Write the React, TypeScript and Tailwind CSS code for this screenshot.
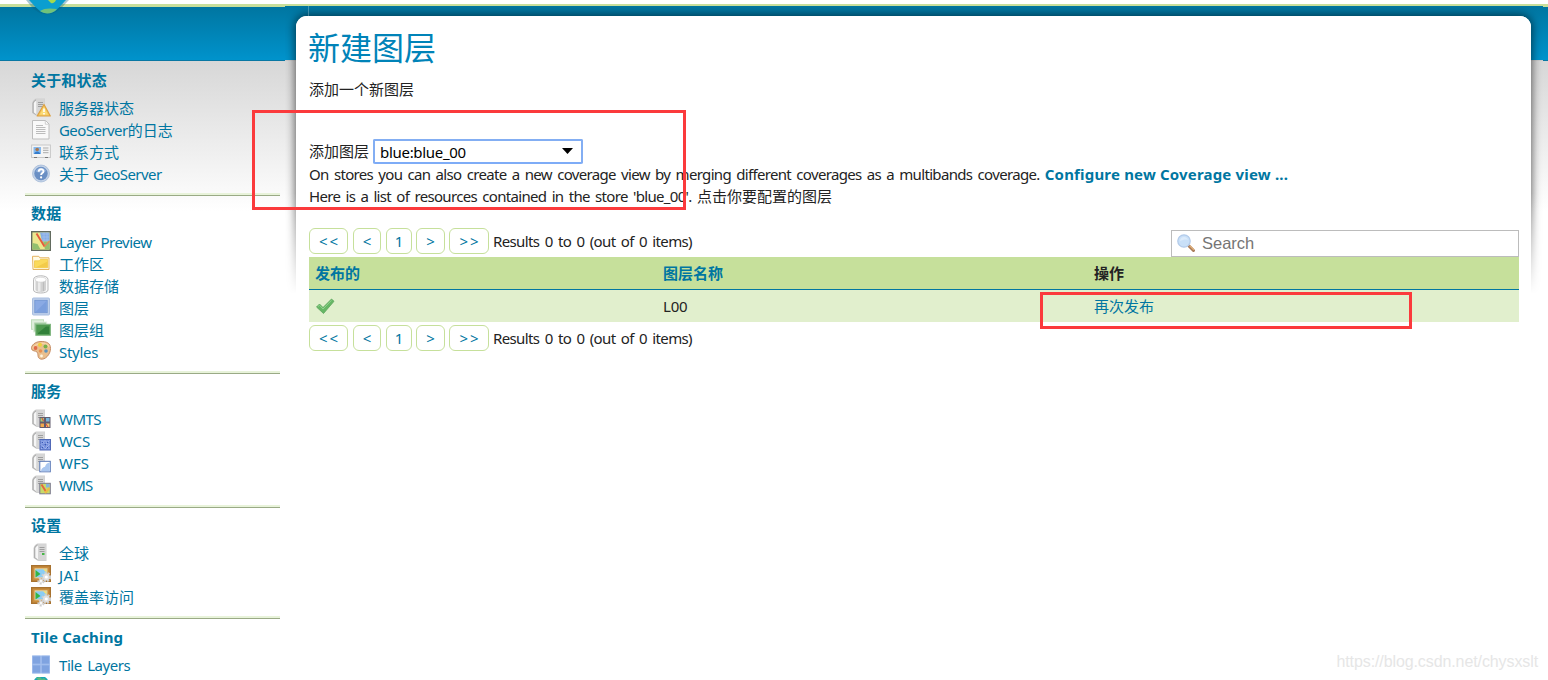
import React from "react";

type IconName =
  | "status" | "page" | "contact" | "help" | "preview" | "folder" | "store" | "layer" | "group" | "styles"
  | "wmts" | "wcs" | "wfs" | "wms" | "server" | "jai" | "tiles" | "globe";

function Tower() {
  return (
    <g>
      <path d="M1 5.500C1 3.500 3 1.500 5 .6h9V18H5.500L1 15z" fill="#d0d0d0" />
      <path d="M1.500 5.500C1.500 4 3 2.200 5 1.200V17L1.500 14.700z" fill="#b0b0b0" />
      <path d="M2.800 5.500c.2-1.300 1.200-2.500 2.700-3v14l-2.700-2z" fill="#f6f6f6" />
      <path d="M5.500 1.200h8V17h-8z" fill="#d6d6d6" />
      <path d="M7 4.500h5M7 6.500h5M7 8.500h5" stroke="#989898" strokeWidth=".9" />
    </g>
  );
}

function Gear({ cx, cy, r }: { cx: number; cy: number; r: number }) {
  return (
    <g>
      <circle cx={cx} cy={cy} r={r} fill="none" stroke="#cfcfcf" strokeWidth="2" strokeDasharray="2 1.300" />
      <circle cx={cx} cy={cy} r={r - 0.6} fill="#dfdfdf" />
      <circle cx={cx} cy={cy} r={r * 0.4} fill="#fff" />
    </g>
  );
}

function Icon({ name }: { name: IconName }) {
  const body = () => {
    switch (name) {
      case "status":
        return (<><Tower /><path d="M13 6.500 19.300 18H6.200z" fill="#f7cb5c" stroke="#dca044" strokeWidth="1.200" strokeLinejoin="round" /><path d="M13 9.300 16.800 16.500H9z" fill="#fbdc78" /><path d="M13 10.500v3.500M13 15v1.400" stroke="#fff" strokeWidth="1.600" /></>);
      case "page":
        return (<><path d="M1.500 .5h13l3.500 3.500v15H1.500z" fill="#f9f9f9" stroke="#bdbdbd" /><path d="M14.300 1v3.200h3.200" fill="#fff" stroke="#c5c5c5" strokeWidth=".8" /><path d="M5 5.500h7M5 7.500h9.500M5 9.500h9.500M5 11.500h9.500M5 13.500h9.500" stroke="#bcbcbc" /></>);
      case "contact":
        return (<><rect x=".6" y="3" width="18.800" height="12.500" fill="#f4f4f4" stroke="#c8c8c8" /><rect x="2.500" y="5" width="7.500" height="7" fill="#85b9ee" /><circle cx="6.200" cy="7.500" r="1.800" fill="#a97850" /><path d="M3.200 12c0-3.500 6-3.500 6 0z" fill="#337ccc" /><path d="M12 6h5.500M12 8.300h5.500M12 10.700h5.500" stroke="#aaa" /><path d="M3 15.500h3M14 15.500h3" stroke="#777" /></>);
      case "help":
        return (<><circle cx="10" cy="9.500" r="8.500" fill="#c3d2e6" stroke="#9db5d6" strokeWidth=".7" /><circle cx="10" cy="9.500" r="6.700" fill="#6a8fc4" /><path d="M4.500 7C7 2.500 13 2.500 15.500 7 13 8.500 7 9.500 4.500 7z" fill="#8babd8" /><path d="M7.700 7.700c0-3.200 4.800-3.200 4.800-.5 0 2-2.400 1.800-2.400 3.900" fill="none" stroke="#fff" strokeWidth="1.900" /><circle cx="10.100" cy="13.400" r="1.100" fill="#fff" /></>);
      case "preview":
        return (<><rect x=".7" y=".7" width="18.600" height="18.600" fill="#ece88f" stroke="#626b5f" strokeWidth="1.400" /><path d="M9 1.500h9.500v9H11z" fill="#86aee6" /><path d="M1.500 12l5 1 3 5.500h-8zM12 10.500h6.500v8H14z" fill="#92c06f" /><path d="M11 3h7M11 6h7M11 9h7M13 1.500v9M16 1.500v9" stroke="#a7c5ef" strokeWidth=".6" /><path d="m5.500 2.500 8 13" stroke="#e55a3d" strokeWidth="1.900" /><path d="M13.500 15.500 18.500 10" stroke="#e88a55" strokeWidth="1.200" /></>);
      case "folder":
        return (<><path d="M1.500 3.300h6.300l1 1.500H18V16.500H2z" fill="#fffbe7" stroke="#e3b363" /><path d="M3.500 7.800h4.600l1.500-1.500h7v8.400H3.500z" fill="#fada5b" stroke="#f1c645" strokeWidth=".8" /><path d="M5 14.300 16.500 8.500v5.800z" fill="#f3cb48" /></>);
      case "store":
        return (<><path d="M2.500 4.500c0-5 14.500-5 14.500 0V15c0 4-14.500 4-14.500 0z" fill="#f8f8f8" stroke="#b9b9b9" /><path d="M4.500 4.500V15c1 2.500 9.500 2.500 10.500 0V4.500z" fill="#d2d2d2" /><path d="M7 7v9.500h2.500V7z" fill="#ebebeb" /><path d="M12.500 7v9" stroke="#bdbdbd" strokeWidth="1.200" /><ellipse cx="9.700" cy="4.700" rx="5.500" ry="2.500" fill="#fff" stroke="#ccc" strokeWidth=".7" /></>);
      case "layer":
        return (<><rect x="1.500" y="1" width="17" height="17" rx="1" fill="#bfd0ea" stroke="#a9bee0" /><rect x="3.800" y="3.300" width="12.400" height="12.400" fill="#8aaae4" stroke="#6f94d0" strokeWidth=".8" /><path d="M4.500 15 15.500 4v11z" fill="#7b9fdd" /></>);
      case "group":
        return (<><rect x=".5" y=".8" width="12" height="9.500" fill="#ddeeda" stroke="#c0dcbb" /><rect x="2.700" y="3" width="13" height="10" fill="#a8cfa6" stroke="#e3efdf" /><rect x="4.800" y="5.300" width="14.700" height="11" fill="#4f9a50" stroke="#83b883" /><path d="m7 14 8-6.500h3V15H7z" fill="#32813a" /></>);
      case "styles":
        return (<><path d="M10 .5C4 .5 0 4.500.5 7.700 1 10.500 4.500 9.500 6 11c1.800 1.800-.2 6 3.500 7C14 19.300 19.500 13.500 19.500 7.500S15 .5 10 .5z" fill="#e9bf8e" stroke="#c68d65" /><path d="M2 7.500c2-5 12-8 16-2" fill="none" stroke="#f6d3a8" strokeWidth="1.500" /><circle cx="4.500" cy="7" r="1.900" fill="#e06a48" /><circle cx="9" cy="3.800" r="2" fill="#f0d03c" /><circle cx="14.500" cy="5.500" r="2" fill="#74b04a" /><circle cx="15" cy="10" r="1.800" fill="#5b93c0" /><circle cx="9.500" cy="10" r="1.800" fill="#e89052" /><circle cx="10.500" cy="15" r="1.400" fill="#fff5df" /></>);
      case "wmts":
        return (<><Tower /><rect x="8.500" y="8" width="11" height="11" fill="#625d6e" /><path d="M9.500 9H13v3.500H9.500z" fill="#a4d278" /><path d="M15 9h3.500v3.500H15z" fill="#75b4da" /><path d="M9.500 14.500H13V18H9.500z" fill="#f0aa4e" /><path d="M15 14.500h3.500V18H15z" fill="#efd173" /><path d="m11 9 1.500 3M15 15l2 3" stroke="#da5447" strokeWidth="1.300" /></>);
      case "wcs":
        return (<><Tower /><rect x="9" y="8.500" width="10.500" height="10.500" fill="#7490dc" stroke="#5169b7" /><path d="m10 9.500 8.500 8.500M14 9.500l4.500 4.500M10 13.500l4.500 4.500M18.500 9.500 10 18M14 9.500 10 13.500M18.500 13.500 14 18" stroke="#a5b7ec" strokeWidth=".9" /><path d="M13.500 13h1.500v1.500h-1.500zM11 11h1v1h-1zM16 11h1v1h-1zM11 16h1v1h-1zM16 16h1v1h-1z" fill="#3a58b4" /></>);
      case "wfs":
        return (<><Tower /><rect x="8.800" y="8.300" width="10.500" height="10.500" fill="#fff" stroke="#5776b5" /><path d="M10 18.200c0-2.500 2-4 4-4.500 1-2.500 2-4 4.800-4.200v8.700z" fill="#a9c6ef" /></>);
      case "wms":
        return (<><Tower /><rect x="8.800" y="8.300" width="10.500" height="10.500" fill="#c7da6a" stroke="#7a7990" /><path d="M15 9h3.500v3.500H15z" fill="#85b5dc" /><path d="m10.500 9.500 5 8" stroke="#e5653e" strokeWidth="1.900" /><path d="m14 18 4.500-5" stroke="#edbc44" strokeWidth="2" /></>);
      case "server":
        return (<><g transform="translate(1.500 0)"><Tower /></g><path d="M11 10h2.500v2H11z" fill="#47b746" /></>);
      case "jai":
        return (<><rect x=".7" y=".7" width="18.600" height="15.600" fill="#c98d3d" stroke="#a8722f" strokeWidth="1.400" /><rect x="4" y="3.800" width="12" height="9" fill="#8bcdf5" stroke="#ecd29a" /><path d="M4.500 5 9.500 9l-5 3.500z" fill="#35b545" /><path d="M12 4.300h3.500v3.200z" fill="#f9e070" /><Gear cx={15.300} cy={12} r={4} /><Gear cx={10} cy={16} r={2.600} /></>);
      case "tiles":
        return (<><rect x="1" y=".5" width="18" height="18" fill="#a8c2ee" /><path d="M1.500 1h8v8h-8zM10.500 1h8v8h-8zM1.500 10h8v8h-8zM10.500 10h8v8h-8z" fill="#7fa3e0" stroke="#9dbaec" strokeWidth=".8" /></>);
      case "globe":
        return (<><circle cx="10" cy="6.800" r="7.800" fill="#18a5b5" /><path d="m5 1 4-1 2 2 2-1 2 2-2 3-5-2z" fill="#59ba7c" /></>);
    }
  };
  return <svg className="size-5 shrink-0" viewBox="0 0 20 20">{body()}</svg>;
}

type Item = { icon: IconName; label: React.ReactNode };

function Latin({ children }: { children: React.ReactNode }) {
  return <span className="tracking-[-0.55px]">{children}</span>;
}

type SectionProps = { title: string; items: Item[]; gap?: string; lift?: string };

function Section({ title, items, gap = "pb-2", lift = "leading-[20px]" }: SectionProps) {
  return (
    <section>
      <div className={`pl-1.5 pt-1.5 ${gap}`}>
        <h2 className="h-[22px] text-[15px] font-bold leading-[22px] tracking-[0.16px] text-[#0076a1]">{title}</h2>
        <ul className="pt-[7px]">
          {items.map((item, index) => (
            <li key={index} className="flex h-[22px] items-start gap-2">
              <Icon name={item.icon} />
              <a className={`whitespace-nowrap text-[15px] text-[#0076a1] ${lift}`}>{item.label}</a>
            </li>
          ))}
        </ul>
      </div>
      <div className="h-[3px] border-b border-[#9aaa86] bg-[#e8f3da]" />
    </section>
  );
}

function PageButton({ className, children }: { className: string; children: React.ReactNode }) {
  return (
    <button className={`h-[26px] rounded-[6px] border border-[#c6e09b] bg-white text-[15px] leading-[24px] text-[#0076a1] ${className}`}>
      {children}
    </button>
  );
}

function Pager() {
  return (
    <div className="flex h-[26px] items-center">
      <PageButton className="mr-[5px] w-[39px] pl-[2px] tracking-[2px]">&lt;&lt;</PageButton>
      <PageButton className="mr-[5px] w-[28px]">&lt;</PageButton>
      <PageButton className="mr-[4px] w-[26px]">1</PageButton>
      <PageButton className="mr-[4px] w-[29px]">&gt;</PageButton>
      <PageButton className="mr-[4px] w-[40px] pl-[2px] tracking-[2px]">&gt;&gt;</PageButton>
      <span className="whitespace-nowrap tracking-[-0.62px] [word-spacing:2px]">Results 0 to 0 (out of 0 items)</span>
    </div>
  );
}

function Backdrop() {
  return (
    <div className="absolute inset-0">
      <div className="mt-1 h-[3px] bg-[#c7df9b]" />
      <div className="h-[53px] bg-gradient-to-b from-[#0076a1] to-[#0093cc]" />
      <div className="h-px bg-[#0877a3]" />
      <div className="h-[150px] bg-gradient-to-b from-[#d7d7d7] to-white" />
      <div className="absolute left-[285px] right-[5px] top-[6px] h-px bg-[#0076a1]" />
      <div className="absolute left-[285px] right-[5px] top-[60px] h-px bg-[#cccccc]" />
      <div className="absolute left-[285px] right-0 top-[6px] h-[288px] overflow-hidden [mask-image:linear-gradient(to_bottom,black_65%,transparent)]">
        <div className="ml-[11px] mr-[17px] mt-[10px] h-[400px] rounded-t-[11px] bg-white shadow-[0_0_10px_1px_rgba(0,0,0,0.6)]" />
      </div>
      <div className="absolute left-[296px] right-[17px] top-[16px] h-[664px] rounded-t-[11px] bg-white" />
      <div className="absolute left-[308px] top-[6px] h-[10px] w-px bg-white/25" />
      <svg className="absolute left-[24px] top-0 h-4 w-12" viewBox="0 0 48 16">
        <path d="M2 0h43c-4 4-9 10-13 12-5 3-13 3-18 0C10 10 6 5 2 0z" fill="#085f7e" opacity=".35" />
        <path d="M5 0h37c-4 4-8 9-11 11-4 3-11 3-15 0C12 8 9 4 5 0z" fill="#0b9ed0" />
        <path d="M16 11c4-3 10-3 17-2-4 5-12 6-17 2z" fill="#70c27a" />
        <path d="M24 0h8c-1 2-3 4-5 3z" fill="#a4d94f" />
      </svg>
    </div>
  );
}

export default function App() {
  return (
    <div className="relative h-[680px] w-[1548px] overflow-hidden bg-white font-['Noto_Sans','Noto_Sans_CJK_SC',sans-serif] text-[15px] leading-[22px] text-[#232323]">
      <Backdrop />
      <div className="relative flex h-[680px] overflow-hidden">
        <aside className="w-[280px] shrink-0 pl-[25px] pt-[63px]">
          <Section title="关于和状态" items={[
            { icon: "status", label: "服务器状态" },
            { icon: "page", label: <><Latin>GeoServer</Latin>的日志</> },
            { icon: "contact", label: "联系方式" },
            { icon: "help", label: <>关于 <Latin>GeoServer</Latin></> },
          ]} gap="pb-[7px]" />
          <Section title="数据" items={[
            { icon: "preview", label: <span className="tracking-[-0.5px] [word-spacing:2px]">Layer Preview</span> },
            { icon: "folder", label: "工作区" },
            { icon: "store", label: "数据存储" },
            { icon: "layer", label: "图层" },
            { icon: "group", label: "图层组" },
            { icon: "styles", label: <span className="tracking-[-0.3px]">Styles</span> },
          ]} lift="leading-[22px]" />
          <Section title="服务" items={[
            { icon: "wmts", label: <Latin>WMTS</Latin> },
            { icon: "wcs", label: <span className="tracking-[-0.2px]">WCS</span> },
            { icon: "wfs", label: "WFS" },
            { icon: "wms", label: <span className="tracking-[-0.8px]">WMS</span> },
          ]} />
          <Section title="设置" items={[
            { icon: "server", label: "全球" },
            { icon: "jai", label: <span className="tracking-[0.5px]">JAI</span> },
            { icon: "jai", label: "覆盖率访问" },
          ]} gap="pb-[7px]" />
          <div className="pt-px">
            <Section title="Tile Caching" items={[
              { icon: "tiles", label: <span className="tracking-[-0.45px] [word-spacing:2px]">Tile Layers</span> },
              { icon: "globe", label: null },
            ]} />
          </div>
        </aside>

        <main className="ml-[29px] w-[1210px] pt-[28px]">
          <h1 className="-ml-px h-10 text-[32px] leading-10 text-[#0083b8]">新建图层</h1>
          <p className="pt-[10px]">添加一个新图层</p>
          <div className="mt-[39px] flex h-[25px] items-center">
            <label className="w-16 pb-[2px]">添加图层</label>
            <button className="flex h-[25px] w-[210px] items-center justify-between rounded-[2px] border-2 border-[#83aef3] border-b-[#7eacf7] bg-white pl-[5px] pr-[8px] text-black">
              <span className="tracking-[-0.3px]">blue:blue_00</span>
              <svg className="mb-0.5 h-[6px] w-[11px]" viewBox="0 0 11 6"><path d="M0 0h11L5.500 6z" fill="#000" /></svg>
            </button>
          </div>
          <p className="-mt-px whitespace-nowrap">
            <span className="tracking-[-0.67px] [word-spacing:2px]">On stores you can also create a new coverage view by merging different coverages as a multibands coverage. </span>
            <a className="font-bold tracking-[0.18px] text-[#0076a1]">Configure new Coverage view ...</a>
          </p>
          <p className="whitespace-nowrap"><span className="tracking-[-0.67px] [word-spacing:2px]">Here is a list of resources contained in the store 'blue_00'. </span>点击你要配置的图层</p>

          <div className="mt-[21px] flex h-[29px] justify-between">
            <Pager />
            <div className="mt-[2px] flex h-[27px] w-[348px] items-center border border-[#bcbcbc] bg-white pb-px pl-[4px] font-['Liberation_Sans',sans-serif] text-[16.5px] text-[#757575]">
              <svg className="mr-[6px] size-5" viewBox="0 0 20 20">
                <path d="m13 13 4.500 4.500" stroke="#a87a58" strokeWidth="3" strokeLinecap="round" />
                <path d="m14 13 3.500 3.500" stroke="#e0b078" strokeWidth="1.300" strokeLinecap="round" />
                <circle cx="8" cy="8" r="6.200" fill="#c9e0f8" stroke="#b3cbea" strokeWidth="1.300" />
                <path d="M4 8c0-5 7-5 8-1-3-1-5 0-8 1z" fill="#dcebfb" />
              </svg>
              <span>Search</span>
            </div>
          </div>

          <div className="grid h-[33px] grid-cols-[348px_431px_1fr] items-center border-b border-[#0076a1] bg-[#c6e09b] pl-1.5 font-bold">
            <a className="text-[#0076a1]">发布的</a>
            <a className="text-[#0076a1]">图层名称</a>
            <span>操作</span>
          </div>
          <div className="mb-[3px] grid h-[32px] grid-cols-[348px_431px_1fr] items-center bg-[#e1efcd] pl-1.5">
            <svg className="size-5" viewBox="0 0 20 20">
              <path d="m1.500 11 3-3L8 11.500 16.500 3l2.500 2.300L8.500 17.500z" fill="#66b765" stroke="#5ba55c" strokeWidth=".8" />
              <path d="m3 10.500 1.500-1.200L8 13l8.500-8.700" fill="none" stroke="#90d28e" />
            </svg>
            <span className="tracking-[-0.2px]">L00</span>
            <a className="text-[#0076a1]">再次发布</a>
          </div>
          <Pager />
        </main>
      </div>

      <div className="absolute left-[252px] top-[110px] h-[100px] w-[434px] border-[3px] border-[#fb3a3c]" />
      <div className="absolute left-[1040px] top-[292px] h-[37px] w-[372px] border-[3px] border-[#fb3a3c]" />
      <div className="absolute bottom-[6px] right-[10px] font-['Liberation_Sans',sans-serif] text-base tracking-[-0.1px] text-[#e6e6e6]">https://blog.csdn.net/chysxslt</div>
    </div>
  );
}
